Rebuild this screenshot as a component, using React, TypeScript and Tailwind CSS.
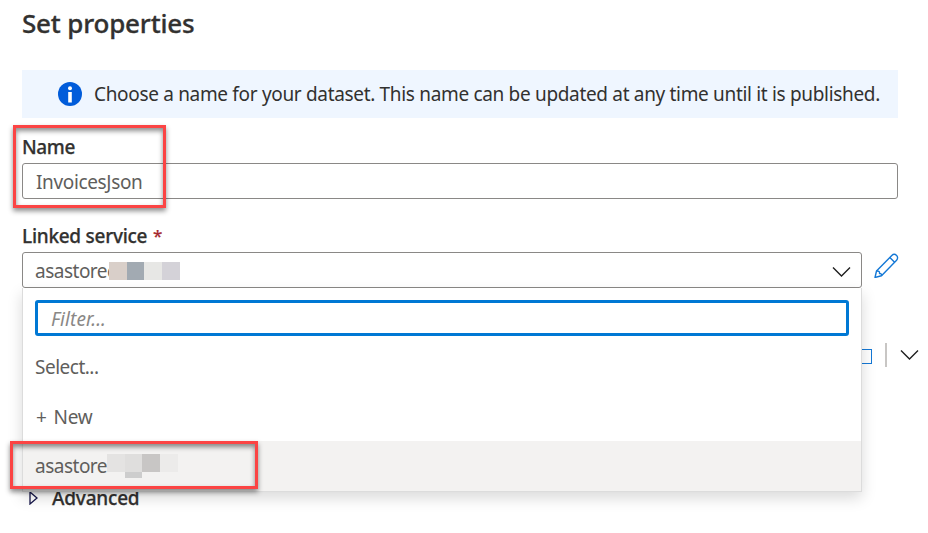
function Highlight({ className }: { className: string }) {
  return (
    <div
      className={`pointer-events-none absolute border-[3px] border-[#fb4444] shadow-[0_3px_5px_rgba(0,0,0,0.45),inset_0_3px_5px_rgba(0,0,0,0.45)] ${className}`}
    />
  );
}

function Chevron() {
  return (
    <svg width="19" height="12" viewBox="0 0 19 12" fill="none" stroke="#1f1f1f" strokeWidth="1.4">
      <path d="M1 1.5 9.5 10 18 1.5" />
    </svg>
  );
}

function Pencil() {
  return (
    <svg width="26" height="26" viewBox="0 0 26 26" fill="none" stroke="#1478d6" strokeWidth="1.4" strokeLinejoin="round">
      <path d="M1 25.500 2.500 19 17.800 3.400a3.300 3.300 0 0 1 4.800 4.800L7.500 23.800Z" />
      <path d="M15.800 5.500l4.800 4.800M2.500 19c2.400-.2 3.400.6 3 2.500 1.500-.3 2.200.6 2 2.300" />
    </svg>
  );
}

function Dropdown() {
  return (
    <div className="absolute top-full left-0 h-[204px] w-full border-x border-b border-[#dcdcdc] bg-white text-[19px] text-[#605e5c] shadow-[0_6px_14px_rgba(0,0,0,0.15)]">
      <div className="px-3 pt-3">
        <div className="flex h-9 items-center rounded-[3px] border-[3px] border-[#0078d4] pt-0.5 pl-[13px] text-[#8a8886] italic">
          <span className="tracking-[0.05px]">Filter...</span>
        </div>
      </div>
      <div className="mt-[7px] flex h-[49px] items-center pl-3">
        <span className="tracking-[-0.5px]">Select...</span>
      </div>
      <div className="flex h-[49px] items-center pt-0.5 pl-3">
        <span className="pl-px tracking-[-0.2px] [word-spacing:2px]">+ New</span>
      </div>
      <div className="flex h-[50px] items-center bg-[#f3f2f1] pl-3">
        <span className="w-[72px] tracking-[-0.5px]">asastore</span>
        <div className="flex h-6 items-start">
          <i className="h-[18px] w-[18px] bg-[#e4e3e2]" />
          <i className="h-6 w-[17px] border-b-6 border-[#cdcdcd] bg-[#dfdedd]" />
          <i className="h-[18px] w-[18px] bg-[#c8c6c5]" />
          <i className="h-[18px] w-[18px] bg-[#ecebea]" />
        </div>
      </div>
    </div>
  );
}

export default function App() {
  return (
    <main className="relative h-[533px] w-[928px] overflow-hidden bg-white pl-[22px] font-['Noto_Sans','Open_Sans',sans-serif] text-[19px] text-[#323130]">
      <h1 className="flex h-[70px] items-start pt-[5px] text-[26px] leading-9 font-medium [-webkit-text-stroke:0.3px]">
        <span className="tracking-[-0.18px]">Set properties</span>
      </h1>
      <div className="flex h-12 w-[876px] items-center bg-[#eff6ff] pl-9">
        <svg width="24" height="24" viewBox="0 0 24 24">
          <circle cx="12" cy="12" r="12" fill="#015cda" />
          <circle cx="12" cy="6.200" r="2" fill="white" />
          <path d="M10.200 10h3.600v10.500h-3.600z" fill="white" />
        </svg>
        <span className="ml-3 tracking-[-0.325px] whitespace-nowrap">
          Choose a name for your dataset. This name can be updated at any time until it is published.
        </span>
      </div>
      <div className="flex h-[45px] items-end pb-0.5 leading-7 font-medium [-webkit-text-stroke:0.25px]">
        <span className="tracking-[-0.4px]">Name</span>
      </div>
      <div className="flex h-9 w-[876px] items-center rounded-[3px] border border-[#8a8886] pt-0.5 pl-3 text-[#605e5c]">
        <span className="pl-px tracking-[-0.35px]">InvoicesJson</span>
      </div>
      <div className="flex h-[53px] items-end pb-0.5 leading-7 font-medium [-webkit-text-stroke:0.25px]">
        <span className="w-[125px] tracking-[-0.27px] whitespace-nowrap">Linked service</span>
        <span className="ml-[6px] text-[17px] font-normal text-[#a4262c]">*</span>
      </div>
      <div className="flex h-9 items-start">
        <div className="relative h-9 w-[840px]">
          <div className="flex h-9 items-center rounded-[3px] border border-[#8a8886] pt-0.5 pr-[10px] pl-3 text-[#605e5c]">
            <span className="w-[74px] tracking-[-0.5px] whitespace-nowrap">asastorec</span>
            <div className="relative flex bg-white">
              <i className="h-[18px] w-[18px] bg-[#d9cfc9]" />
              <i className="h-[18px] w-[17px] bg-[#a2aab2]" />
              <i className="h-[18px] w-[18px] bg-[#e7e7e5]" />
              <i className="h-[18px] w-[18px] bg-[#d4d2d8]" />
            </div>
            <div className="mt-0.5 ml-auto">
              <Chevron />
            </div>
          </div>
          <Dropdown />
        </div>
        <div className="ml-3">
          <Pencil />
        </div>
      </div>
      <div className="mt-[55px] flex h-6 items-center pl-[838px]">
        <div className="mt-1.5 h-[15px] w-3 self-start border border-[#1478d6]" />
        <div className="ml-[13px] h-6 w-0.5 bg-[#c8c6c4]" />
        <div className="ml-[13px]">
          <Chevron />
        </div>
      </div>
      <div className="mt-[117px] flex h-7 items-center pl-[7px] font-medium [-webkit-text-stroke:0.25px]">
        <svg width="10" height="14" viewBox="0 0 10 14" fill="none" stroke="#17174a" strokeWidth="1.3">
          <path d="M1 1v12l7-6Z" />
        </svg>
        <span className="ml-[13px] tracking-[-0.2px]">Advanced</span>
      </div>
      <Highlight className="top-[125px] left-[13px] h-[83px] w-[153px]" />
      <Highlight className="top-[441px] left-[10px] h-[48px] w-[248px]" />
    </main>
  );
}
